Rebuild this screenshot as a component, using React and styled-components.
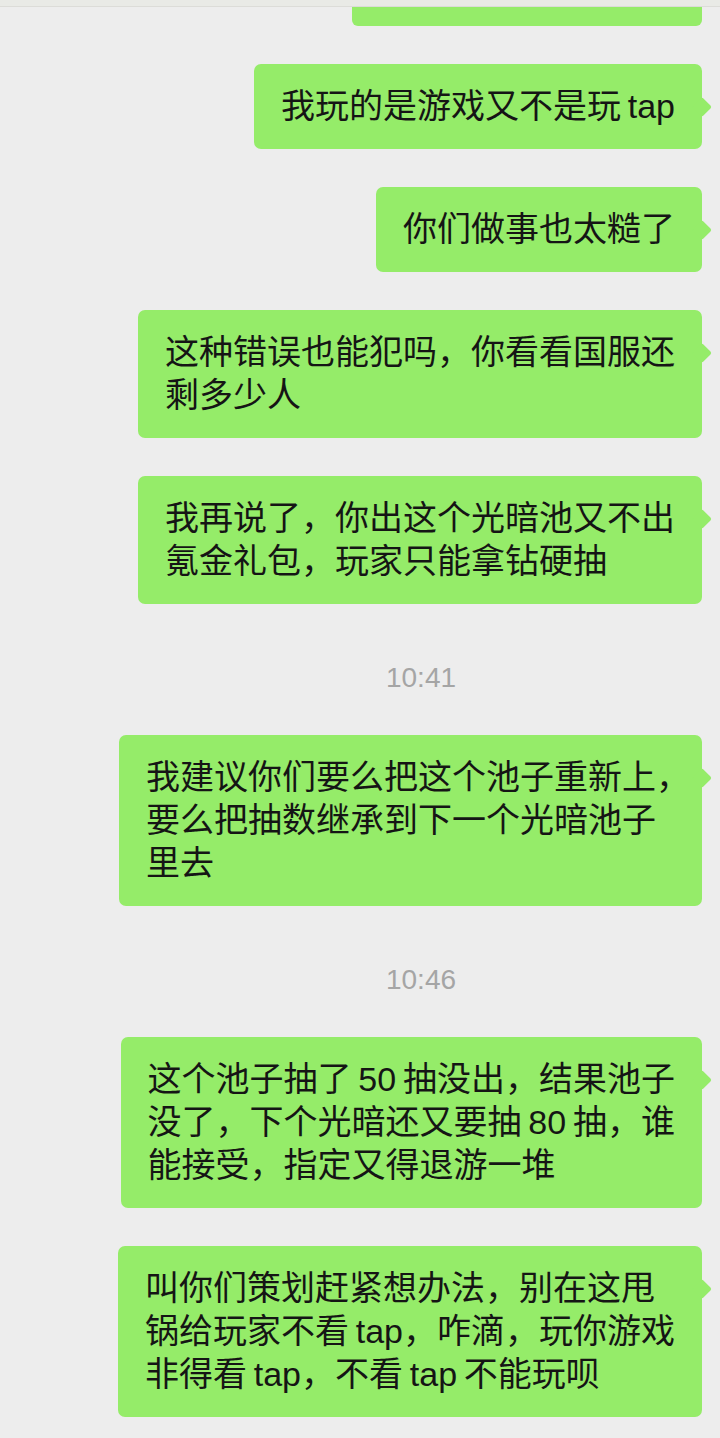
import React from 'react';
import styled, { createGlobalStyle } from 'styled-components';

const GlobalStyle = createGlobalStyle`
body {
    margin: 0;
    background: #ededed;
    font-family: 'Liberation Sans', 'Noto Sans CJK SC', sans-serif;
}
`

// thin space between Chinese and Latin, like the phone does
const s = '\u2009';

const messages = [
    { type: 'msg', lines: [`我玩的是游戏又不是玩${s}tap`] },
    { type: 'msg', lines: ['你们做事也太糙了'] },
    { type: 'msg', lines: ['这种错误也能犯吗，你看看国服还', '剩多少人'] },
    { type: 'msg', lines: ['我再说了，你出这个光暗池又不出', '氪金礼包，玩家只能拿钻硬抽'] },
    { type: 'time', text: '10:41' },
    { type: 'msg', w: 583, lines: ['我建议你们要么把这个池子重新上，', '要么把抽数继承到下一个光暗池子', '里去'] },
    { type: 'time', text: '10:46' },
    { type: 'msg', lines: [`这个池子抽了${s}50${s}抽没出，结果池子`, `没了，下个光暗还又要抽${s}80${s}抽，谁`, '能接受，指定又得退游一堆'] },
    { type: 'msg', lines: ['叫你们策划赶紧想办法，别在这甩', `锅给玩家不看${s}tap，咋滴，玩你游戏`, `非得看${s}tap，不看${s}tap${s}不能玩呗`] },
];

const App = () => {
    return (
        <>
            <GlobalStyle />
            <Screen>
                <TopBar />
                <Chat>
                    <Stub />
                    {messages.map((m, i) =>
                        m.type === 'time' ? (
                            <TimeStamp key={i}>{m.text}</TimeStamp>
                        ) : (
                            <Row key={i}>
                                <Bubble w={m.w}>
                                    {m.lines.map((l, j) => (
                                        <React.Fragment key={j}>
                                            {j > 0 && <br />}
                                            {l}
                                        </React.Fragment>
                                    ))}
                                </Bubble>
                            </Row>
                        )
                    )}
                </Chat>
            </Screen>
        </>
    )
}

const Screen = styled.div`
width: 720px;
height: 1438px;
overflow: hidden;
background: #ededed;
`

const TopBar = styled.div`
height: 6px;
background: #e9eae6;
border-bottom: 1px solid #dcdcd8;
`

const Chat = styled.div`
display: flex;
flex-direction: column;
gap: 38px;
padding-right: 18px;
`

const Stub = styled.div`
align-self: flex-end;
width: 350px;
height: 19px;
background: #95ec69;
border-radius: 0 0 6px 6px;
`

const Row = styled.div`
display: flex;
justify-content: flex-end;
`

const Bubble = styled.div`
position: relative;
box-sizing: border-box;
${props => props.w ? `width: ${props.w}px;` : ''}
padding: 21px 27px;
background: #95ec69;
border-radius: 7px;
color: #151515;
font-size: 34px;
line-height: 43px;
white-space: nowrap;
&::after {
    content: '';
    position: absolute;
    top: 36px;
    left: calc(100% - 7px);
    width: 14px;
    height: 14px;
    background: #95ec69;
    border-radius: 2px;
    transform: rotate(45deg);
}
`

const TimeStamp = styled.div`
margin: 21px 0 4px;
padding-left: 140px;
text-align: center;
font-size: 28px;
line-height: 30px;
color: #a5a5a5;
`

export default App;
